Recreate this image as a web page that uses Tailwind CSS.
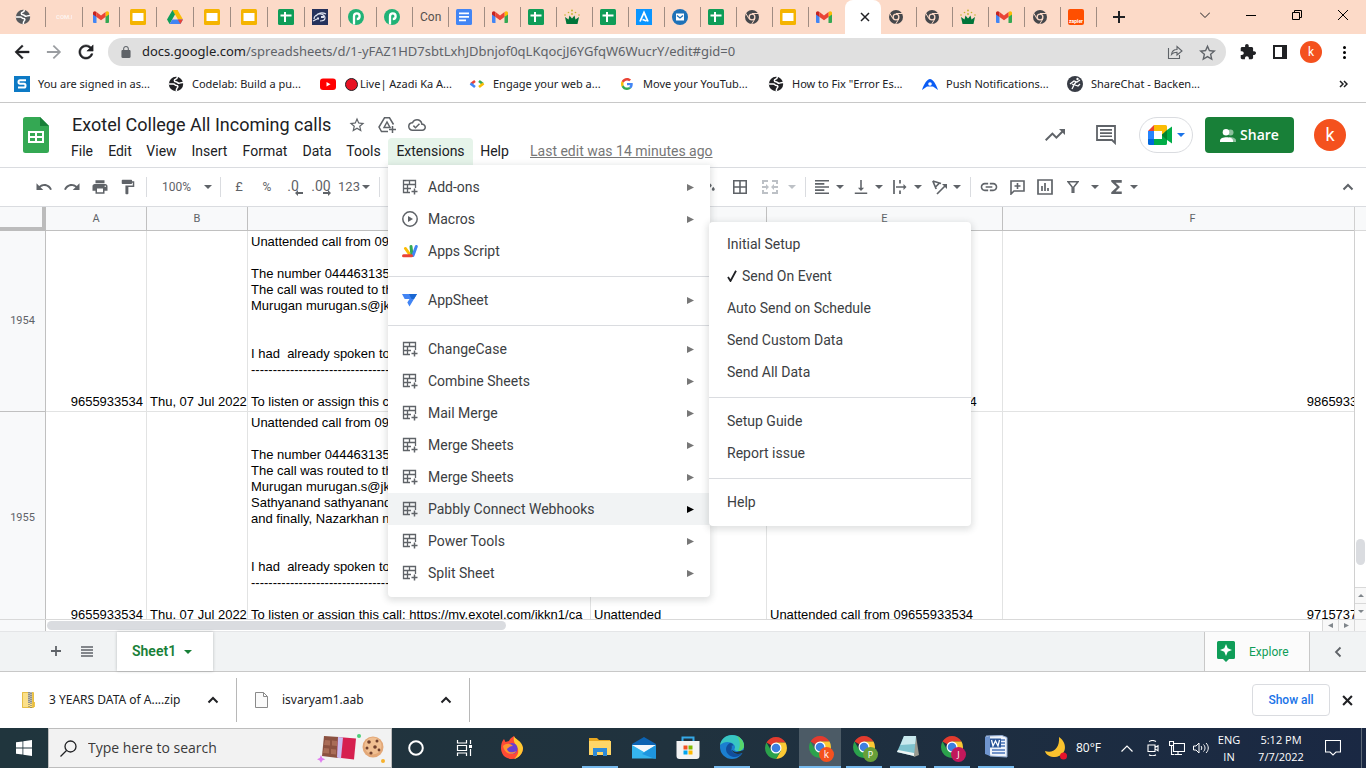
<!DOCTYPE html>
<html lang="en">
<head>
<meta charset="utf-8">
<title>Exotel College All Incoming calls - Google Sheets</title>
<script src="https://cdn.jsdelivr.net/npm/@tailwindcss/browser@4"></script>
</head>
<body class="h-screen overflow-hidden bg-white font-[Roboto,sans-serif] text-[#202124]">
<svg class="hidden" aria-hidden="true">
  <symbol id="globe" viewBox="0 0 16 16"><circle cx="8" cy="8" r="7.200"/><path d="M1 8h4.500c1.500 0 1.300 1.600 3 1.600s1.700 1.400.8 2.200S8.300 13 8.300 15M9.300 1c0 1.500-.6 1.900-1.900 2.200S5.800 5.800 7.700 5.800 9.500 7.300 11 7.300s1.500-.9 4-.9" fill="none" stroke="#fff" stroke-width="1.500"/></symbol>
  <symbol id="gmail" viewBox="0 0 16 12"><path d="M0 2v9a1 1 0 0 0 1 1h2.500V5z" fill="#4285f4"/><path d="M16 2v9a1 1 0 0 1-1 1h-2.500V5z" fill="#34a853"/><path d="M12.500 1v5L16 3.500V2c0-1.600-1.800-2.500-3.500-1z" fill="#fbbc04"/><path d="M3.500 1v5L0 3.500V2C0 .4 1.800-.5 3.500 1z" fill="#c5221f"/><path d="M3.500 1v5L8 9.300 12.500 6V1L8 4.400z" fill="#ea4335"/></symbol>
  <symbol id="slides" viewBox="0 0 16 16"><rect width="16" height="16" rx="1.500" fill="#f5b400"/><rect x="2.500" y="4" width="11" height="8" fill="#fff"/></symbol>
  <symbol id="sheet" viewBox="0 0 16 16"><rect width="16" height="16" rx="1.500" fill="#0f9d58"/><path d="M6 3h2v2.500h5.500v2H8V13H6V7.500H2.500v-2H6z" fill="#fff"/></symbol>
  <symbol id="doc" viewBox="0 0 16 16"><rect width="16" height="16" rx="1.500" fill="#4285f4"/><path d="M3 3.500h10v1.700H3zM3 7h10v1.700H3zM3 10.500h7v1.700H3z" fill="#fff"/></symbol>
  <symbol id="drive" viewBox="0 0 16 14"><path d="M5.500 0h5L8 4.400z" fill="#188038"/><path d="M5.500 0 0 9.500 2.600 14 8 4.500z" fill="#0f9d58"/><path d="M10.500 0 16 9.500h-5L5.500 0z" fill="#fbbc04"/><path d="M5.300 9.500H16L13.400 14H2.600z" fill="#4285f4"/><path d="M10.700 9.500H16L13.400 14z" fill="#ea4335"/></symbol>
  <symbol id="pabbly" viewBox="0 0 16 16"><circle cx="8" cy="8" r="8" fill="#20b276"/><path d="M6 15.500V7.200a2.800 2.800 0 1 1 2.800 2.800" fill="none" stroke="#fff" stroke-width="2.300"/></symbol>
  <symbol id="crown" viewBox="0 0 16 16"><path d="M2.500 15h11l1.500-7-3.500 2.500-1-4L8 9.500l-2.500-3-1 4L1 8z" fill="#00753a"/><g fill="#c5b52c"><circle cx="1" cy="6" r=".8"/><circle cx="4.500" cy="3.500" r=".8"/><circle cx="8" cy="1.500" r=".9"/><circle cx="11.500" cy="3.500" r=".8"/><circle cx="15" cy="6" r=".8"/><circle cx="8" cy="5" r=".9"/></g></symbol>
  <symbol id="chromegray" viewBox="0 0 16 16"><circle cx="8" cy="8" r="7" fill="#45474b"/><circle cx="8" cy="8" r="3.500" fill="#fcdac8"/><circle cx="8" cy="8" r="2.200" fill="#45474b"/><path d="M8 4.500h6.500M5 9.700 1.700 4.200M11 9.700 7.700 15" stroke="#fcdac8" stroke-width="1"/></symbol>
  <symbol id="chrome" viewBox="0 0 24 24"><path d="M12 12 2.500 6.500A11 11 0 0 1 21.500 6.500H12z" fill="#e33b2e"/><path d="M12 12l0-5.500h9.500A11 11 0 0 1 12 23l4.800-8.300z" fill="#fcc934"/><path d="M12 12l4.800 2.700L12 23A11 11 0 0 1 2.500 6.500l4.700 8.200z" fill="#2ba24c"/><circle cx="12" cy="12" r="5.500" fill="#fff"/><circle cx="12" cy="12" r="4.300" fill="#3d7fe0"/></symbol>
  <symbol id="caret" viewBox="0 0 8 4"><path d="M0 0h8L4 4z"/></symbol>
  <symbol id="tri" viewBox="0 0 7 7"><path d="M0 0v7l7-3.500z"/></symbol>
  <symbol id="star" viewBox="0 0 24 24"><path d="M22 9.240l-7.190-.62L12 2 9.190 8.630 2 9.240l5.460 4.730L5.820 21 12 17.270 18.180 21l-1.630-7.030L22 9.240zM12 15.400l-3.760 2.270 1-4.280-3.320-2.880 4.380-.38L12 6.100l1.710 4.040 4.380.38-3.320 2.880 1 4.280L12 15.400z"/></symbol>
  <symbol id="addon" viewBox="0 0 16 16"><path d="M13.500 9V1.500h-12v12H8M1.500 5.500h12M1.500 9.500H9M7.500 1.500v4M5.500 5.500v8" fill="none" stroke="#5f6368" stroke-width="1.300"/><path d="M12.500 9.500v6M9.500 12.500h6" stroke="#5f6368" stroke-width="1.500"/></symbol>
  <symbol id="up" viewBox="0 0 12 8"><path d="M1.500 6.500 6 2l4.500 4.500" fill="none" stroke="currentColor" stroke-width="2"/></symbol>
</svg>

<div class="flex h-full flex-col">
  <!-- Tab strip -->
  <div class="flex h-[34px] shrink-0 items-center bg-[#fcdac8] text-xs" role="tablist">
    <div class="flex h-5 w-[46px] items-center justify-center border-r border-[#a08c82]"><svg class="size-4 fill-[#55585c]"><use href="#globe"/></svg></div>
    <div class="flex h-5 w-[37px] items-center justify-center border-r border-[#a08c82]"><span class="w-4 overflow-hidden text-[6px] font-bold text-[#fdf3ee]">COM.NT</span></div>
    <div class="flex h-5 w-[37px] items-center justify-center border-r border-[#a08c82]"><svg class="h-3 w-4"><use href="#gmail"/></svg></div>
    <div class="flex h-5 w-[37px] items-center justify-center border-r border-[#a08c82]"><svg class="size-4"><use href="#slides"/></svg></div>
    <div class="flex h-5 w-[37px] items-center justify-center border-r border-[#a08c82]"><svg class="h-[14px] w-4"><use href="#drive"/></svg></div>
    <div class="flex h-5 w-[37px] items-center justify-center border-r border-[#a08c82]"><svg class="size-4"><use href="#slides"/></svg></div>
    <div class="flex h-5 w-[37px] items-center justify-center border-r border-[#a08c82]"><svg class="size-4"><use href="#slides"/></svg></div>
    <div class="flex h-5 w-[37px] items-center justify-center border-r border-[#a08c82]"><svg class="size-4"><use href="#sheet"/></svg></div>
    <div class="flex h-5 w-9 items-center justify-start border-r border-[#a08c82] pl-[7px]"><svg class="size-4" viewBox="0 0 16 16"><path d="M0 0h16v16H0z" fill="#25325c"/><path d="M2 10c0-3 3-5 6-5s5 2 5 4-2 3-5 3M1 12l4-2M4 7c2-3 6-4 10-2" fill="none" stroke="#dfe4f0" stroke-width="1.200"/><path d="M5 8.500h2v2H5zM9 7h3v2H9z" fill="#dfe4f0"/></svg></div>
    <div class="flex h-5 w-9 items-center justify-start border-r border-[#a08c82] pl-[7px]"><svg class="size-4"><use href="#pabbly"/></svg></div>
    <div class="flex h-5 w-9 items-center justify-start border-r border-[#a08c82] pl-[7px]"><svg class="size-4"><use href="#pabbly"/></svg></div>
    <div class="flex h-5 w-9 items-center overflow-hidden border-r border-[#a08c82] pl-[7px] text-[#55504d]">Con</div>
    <div class="flex h-5 w-9 items-center justify-start border-r border-[#a08c82] pl-[7px]"><svg class="size-4"><use href="#doc"/></svg></div>
    <div class="flex h-5 w-9 items-center justify-start border-r border-[#a08c82] pl-[7px]"><svg class="h-3 w-4"><use href="#gmail"/></svg></div>
    <div class="flex h-5 w-9 items-center justify-start border-r border-[#a08c82] pl-[7px]"><svg class="size-4"><use href="#sheet"/></svg></div>
    <div class="flex h-5 w-9 items-center justify-start border-r border-[#a08c82] pl-[7px]"><svg class="size-4"><use href="#crown"/></svg></div>
    <div class="flex h-5 w-9 items-center justify-start border-r border-[#a08c82] pl-[7px]"><svg class="size-4"><use href="#sheet"/></svg></div>
    <div class="flex h-5 w-9 items-center justify-start border-r border-[#a08c82] pl-[7px]"><svg class="size-4" viewBox="0 0 16 16"><path d="M0 0h16v16H0z" fill="#0a95ff"/><path d="M4 12.500 8 3.500l4 9M6.500 10.500l4 1.500" fill="none" stroke="#fff" stroke-width="1.800"/></svg></div>
    <div class="flex h-5 w-9 items-center justify-start border-r border-[#a08c82] pl-[7px]"><svg class="size-4" viewBox="0 0 16 16"><circle cx="8" cy="8" r="8" fill="#1f72b8"/><path d="M4 4.500h8v7H4z" fill="#fff"/><path d="m5 6.500 3 2.500 3-2.500" fill="none" stroke="#1f72b8" stroke-width="1.300"/></svg></div>
    <div class="flex h-5 w-9 items-center justify-start border-r border-[#a08c82] pl-[7px]"><svg class="size-4"><use href="#sheet"/></svg></div>
    <div class="flex h-5 w-9 items-center justify-start border-r border-[#a08c82] pl-[7px]"><svg class="size-4"><use href="#chromegray"/></svg></div>
    <div class="flex h-5 w-9 items-center justify-start border-r border-[#a08c82] pl-[7px]"><svg class="size-4"><use href="#slides"/></svg></div>
    <div class="flex h-5 w-9 items-center justify-start pl-[7px]"><svg class="h-3 w-4"><use href="#gmail"/></svg></div>
    <div class="flex h-full w-9 items-center justify-center rounded-t-lg bg-white pl-1"><button aria-label="Close tab"><svg class="size-[10px]" viewBox="0 0 10 10"><path d="m1 1 8 8M9 1 1 9" stroke="#202124" stroke-width="1.500"/></svg></button></div>
    <div class="flex h-5 w-9 items-center justify-start border-r border-[#a08c82] pl-[7px]"><svg class="size-4"><use href="#chromegray"/></svg></div>
    <div class="flex h-5 w-9 items-center justify-start border-r border-[#a08c82] pl-[7px]"><svg class="size-4"><use href="#chromegray"/></svg></div>
    <div class="flex h-5 w-9 items-center justify-start border-r border-[#a08c82] pl-[7px]"><svg class="size-4"><use href="#crown"/></svg></div>
    <div class="flex h-5 w-9 items-center justify-start border-r border-[#a08c82] pl-[7px]"><svg class="h-3 w-4"><use href="#gmail"/></svg></div>
    <div class="flex h-5 w-9 items-center justify-start border-r border-[#a08c82] pl-[7px]"><svg class="size-4"><use href="#chromegray"/></svg></div>
    <div class="flex h-5 w-9 items-center justify-start border-r border-[#a08c82] pl-[7px]"><div class="flex size-4 items-end justify-center rounded-xs bg-[#ff4f00] text-[5px] leading-[8px] font-bold text-white">zapier</div></div>
    <button class="flex w-11 justify-center" aria-label="New tab"><svg class="size-3" viewBox="0 0 12 12"><path d="M6 0v12M0 6h12" stroke="#202124" stroke-width="2"/></svg></button>
    <div class="ml-auto flex pb-1">
      <button class="flex h-6 w-[46px] items-center justify-center" aria-label="Search tabs"><svg class="h-[6px] w-[10px]" viewBox="0 0 10 6"><path d="m0 .5 5 5 5-5" fill="none" stroke="#202124"/></svg></button>
      <button class="flex h-6 w-[46px] items-center justify-center" aria-label="Minimise"><span class="h-px w-[10px] bg-black"></span></button>
      <button class="flex h-6 w-[46px] items-center justify-center" aria-label="Restore"><svg class="size-[10px]" viewBox="0 0 10 10"><path d="M.5 2.500h7v7h-7zM2.500 2.500v-2h7v7h-2" fill="none" stroke="#000"/></svg></button>
      <button class="flex h-6 w-[46px] items-center justify-center" aria-label="Close"><svg class="size-[10px]" viewBox="0 0 10 10"><path d="m0 0 10 10M10 0 0 10" stroke="#000"/></svg></button>
    </div>
  </div>

  <!-- Address bar -->
  <div class="flex h-9 shrink-0 items-center pl-[14px]">
    <button class="mr-4 flex" aria-label="Back"><svg class="size-4" viewBox="3 3 18 18"><path d="M20 11H7.830l5.590-5.590L12 4l-8 8 8 8 1.410-1.410L7.830 13H20v-2z" fill="#202124" stroke="#202124" stroke-width=".5"/></svg></button>
    <button class="mr-4 flex" aria-label="Forward"><svg class="size-4 rotate-180" viewBox="3 3 18 18"><path d="M20 11H7.830l5.590-5.590L12 4l-8 8 8 8 1.410-1.410L7.830 13H20v-2z" fill="#9a9da1"/></svg></button>
    <button class="mr-[14px] flex" aria-label="Reload"><svg class="size-4" viewBox="3 3 18 18"><path d="M17.650 6.350C16.200 4.900 14.210 4 12 4c-4.420 0-7.990 3.580-7.990 8s3.570 8 7.990 8c3.730 0 6.840-2.550 7.730-6h-2.080c-.82 2.330-3.040 4-5.650 4-3.310 0-6-2.690-6-6s2.690-6 6-6c1.660 0 3.140.69 4.220 1.780L13 11h7V4l-2.350 2.350z" fill="#202124" stroke="#202124" stroke-width=".6"/></svg></button>
    <div class="flex h-7 min-w-0 flex-1 items-center rounded-full bg-[#e0e0e0] pr-[10px] pl-3">
      <svg class="mr-[10px] size-3 shrink-0 fill-[#5f6368]" viewBox="2 1 20 21"><path d="M18 8h-1V6c0-2.760-2.240-5-5-5S7 3.240 7 6v2H6c-1.100 0-2 .9-2 2v10c0 1.100.9 2 2 2h12c1.100 0 2-.9 2-2V10c0-1.100-.9-2-2-2zM8.900 6c0-1.710 1.390-3.100 3.100-3.100s3.100 1.390 3.100 3.100v2H8.900V6z"/></svg>
      <span class="flex-1 font-['Noto_Sans',sans-serif] text-[13px] whitespace-nowrap text-[#5f6368]"><span class="text-[#202124]">docs.google.com</span>/spreadsheets/d/1-yFAZ1HD7sbtLxhJDbnjof0qLKqocjJ6YGfqW6WucrY/edit#gid=0</span>
      <button class="mr-4" aria-label="Share this page"><svg class="size-4" viewBox="0 0 16 16"><path d="M1.500 4v10.500h11V11M4.500 10.500c.5-3.500 2.500-5 5.500-5V2.500L15 7l-5 4V8.300c-2.500 0-4 .5-5.500 2.200z" fill="none" stroke="#5f6368" stroke-width="1.100"/></svg></button>
      <button aria-label="Bookmark this tab"><svg class="size-[17px] fill-[#5f6368]" viewBox="2 2 20 19"><use href="#star" width="24" height="24"/></svg></button>
    </div>
    <button class="ml-[14px]" aria-label="Extensions"><svg class="size-4 fill-[#202124]" viewBox="1 1 22 22"><path d="M20.500 11H19V7c0-1.100-.9-2-2-2h-4V3.500C13 2.120 11.880 1 10.500 1S8 2.120 8 3.500V5H4c-1.100 0-1.990.9-1.990 2v3.800H3.500c1.490 0 2.700 1.210 2.700 2.700s-1.210 2.700-2.700 2.700H2V20c0 1.100.9 2 2 2h3.800v-1.500c0-1.490 1.210-2.700 2.700-2.700 1.490 0 2.700 1.210 2.700 2.700V22H17c1.100 0 2-.9 2-2v-4h1.500c1.380 0 2.500-1.120 2.500-2.500S21.880 11 20.500 11z"/></svg></button>
    <button class="ml-4" aria-label="Side panel"><svg class="size-4" viewBox="0 0 16 16"><path d="M2 2h12v12H2z" fill="#fff" stroke="#202124" stroke-width="2"/><path d="M10 2h4v12h-4z" fill="#202124"/></svg></button>
    <button class="ml-3 flex size-[22px] items-center justify-center rounded-full bg-[#f4511e] text-xs text-white" aria-label="Profile">k</button>
    <button class="mr-4 ml-3 flex w-4 flex-col items-center gap-[2px] pl-1" aria-label="Browser menu"><span class="size-[3px] rounded-full bg-black"></span><span class="size-[3px] rounded-full bg-black"></span><span class="size-[3px] rounded-full bg-black"></span></button>
  </div>

  <!-- Bookmarks -->
  <nav class="flex h-[33px] shrink-0 items-center border-b border-[#c8c8c8] pb-1 pl-[14px] font-['Noto_Sans',sans-serif] text-[11px] whitespace-nowrap" aria-label="Bookmarks">
    <a href="#" class="flex w-[154px] items-center gap-2"><svg class="size-4" viewBox="0 0 16 16"><path d="M0 0h16v16H0z" fill="#0d7ac5"/><path d="M12 4.300H6c-2 0-2 3.500 0 3.500h4c2 0 2 3.700 0 3.700H4" fill="none" stroke="#fff" stroke-width="2"/></svg>You are signed in as...</a>
    <a href="#" class="flex w-[152px] items-center gap-2"><svg class="size-4 fill-[#202124]"><use href="#globe"/></svg>Codelab: Build a pu...</a>
    <a href="#" class="flex w-[149px] items-center"><svg class="mr-[9px] size-4" viewBox="0 0 16 16"><rect y="2.500" width="16" height="11.500" rx="3" fill="#f00"/><path d="M6.500 6v4.500l4-2.200z" fill="#fff"/></svg><span class="mr-0.5 size-[13px] rounded-full border border-[#202124] bg-[#e81123]"></span>Live| Azadi Ka A...</a>
    <a href="#" class="flex w-[150px] items-center gap-2"><svg class="size-4" viewBox="0 0 16 16"><path d="M6 5 2 8" stroke="#ea4335" stroke-width="2.600"/><path d="m1.500 7.500 4.500 3.500" stroke="#4285f4" stroke-width="2.600"/><path d="m10 5 4 3" stroke="#34a853" stroke-width="2.600"/><path d="M14.500 7.500 10 11" stroke="#fbbc04" stroke-width="2.600"/></svg>Engage your web a...</a>
    <a href="#" class="flex w-[149px] items-center gap-2"><svg class="size-4 p-0.5" viewBox="0 0 48 48"><path fill="#EA4335" d="M24 9.500c3.540 0 6.710 1.220 9.210 3.600l6.850-6.850C35.900 2.380 30.470 0 24 0 14.620 0 6.510 5.380 2.560 13.220l7.980 6.190C12.430 13.720 17.740 9.500 24 9.500z"/><path fill="#4285F4" d="M46.980 24.550c0-1.570-.15-3.090-.38-4.550H24v9.020h12.940c-.58 2.960-2.260 5.480-4.780 7.180l7.730 6c4.510-4.180 7.090-10.360 7.090-17.650z"/><path fill="#FBBC05" d="M10.530 28.590c-.48-1.450-.76-2.990-.76-4.590s.27-3.140.76-4.590l-7.980-6.190C.92 16.460 0 20.120 0 24s.92 7.540 2.560 10.780l7.970-6.190z"/><path fill="#34A853" d="M24 48c6.480 0 11.930-2.130 15.890-5.810l-7.730-6c-2.150 1.450-4.920 2.300-8.160 2.300-6.260 0-11.570-4.220-13.470-9.910l-7.980 6.190C6.510 42.620 14.620 48 24 48z"/></svg>Move your YouTub...</a>
    <a href="#" class="flex w-[154px] items-center gap-2"><svg class="size-4 fill-[#202124]"><use href="#globe"/></svg>How to Fix "Error Es...</a>
    <a href="#" class="flex w-[145px] items-center gap-2"><svg class="size-4" viewBox="0 0 16 16"><path d="M0 14c2-6 5-11 8-11s6 5 8 11l-5-3.500H5z" fill="#0a5cf5"/><circle cx="8" cy="8" r="1.800" fill="#fff"/></svg>Push Notifications...</a>
    <a href="#" class="flex items-center gap-2"><svg class="size-4" viewBox="0 0 16 16"><circle cx="8" cy="8" r="8" fill="#383c45"/><path d="m3 8 4-3 3 1 3-2M5 13l2-4-2-1M8 9l3 1 2-2M9 6l-3 4" fill="none" stroke="#fff" stroke-width="1.300"/><circle cx="10.500" cy="3" r="1.200" fill="#fff"/></svg>ShareChat - Backen...</a>
    <button class="mr-[18px] ml-auto" aria-label="More bookmarks"><svg class="h-2 w-[9px]" viewBox="0 0 9 8"><path d="m1 1 3 3-3 3M5 1l3 3-3 3" fill="none" stroke="#202124" stroke-width="1.500"/></svg></button>
  </nav>

  <!-- Document header -->
  <header class="relative z-20 flex h-[65px] shrink-0 items-start border-b border-[#dadce0]">
    <svg class="mt-[14px] ml-[23px] h-9 w-[26px] shrink-0" viewBox="0 0 26 36"><path d="M2.500 0H17l9 9v24.500a2.500 2.500 0 0 1-2.500 2.500h-21A2.500 2.500 0 0 1 0 33.500v-31A2.500 2.500 0 0 1 2.500 0z" fill="#34a853"/><path d="M17 0l9 9h-9z" fill="#188038"/><path d="M5 14h16v12H5zm2 2v3h5v-3zm7 0v3h5v-3zm-7 5v3h5v-3zm7 0v3h5v-3z" fill="#fff" fill-rule="evenodd"/></svg>
    <div class="flex-1 pl-[14px] whitespace-nowrap">
      <div class="flex h-[35px] items-center pt-2 pl-[9px]">
        <h1 class="w-[276px] text-lg">Exotel College All Incoming calls</h1>
        <button class="mr-3" aria-label="Star"><svg class="size-[18px] fill-[#5f6368]"><use href="#star"/></svg></button>
        <button class="mr-3" aria-label="Add shortcut to Drive"><svg class="size-[18px]" viewBox="0 0 18 18"><path d="M10 15.500H3.500L1 11 6.500 1.800h5l4 6.700" fill="none" stroke="#5f6368" stroke-width="1.500"/><path d="M6 11.500 9 6l3 5.500z" fill="none" stroke="#5f6368" stroke-width="1.500"/><path d="M14.500 10v7M11 13.500h7" stroke="#5f6368" stroke-width="1.500"/></svg></button>
        <button aria-label="See document status"><svg class="size-[18px] fill-[#5f6368]" viewBox="0 0 24 24"><path d="M19.350 10.040A7.490 7.490 0 0 0 12 4C9.110 4 6.600 5.640 5.350 8.040A5.994 5.994 0 0 0 0 14c0 3.310 2.690 6 6 6h13c2.760 0 5-2.240 5-5 0-2.640-2.050-4.780-4.650-4.960zM19 18H6c-2.210 0-4-1.790-4-4 0-2.050 1.530-3.760 3.560-3.970l1.070-.11.5-.95A5.469 5.469 0 0 1 12 6c2.620 0 4.880 1.860 5.390 4.430l.3 1.500 1.530.11A2.980 2.980 0 0 1 22 15c0 1.650-1.350 3-3 3zm-9-3.820-2.090-2.090L6.500 13.500 10 17l6.010-6.010-1.410-1.410z"/></svg></button>
      </div>
      <div class="flex h-[27px] items-center text-[14px]" role="menubar">
        <button class="w-[38px] text-center">File</button>
        <button class="w-[38px] text-center">Edit</button>
        <button class="w-[45px] text-center">View</button>
        <button class="w-[51px] text-center">Insert</button>
        <button class="w-[60px] text-center">Format</button>
        <button class="w-[44px] text-center">Data</button>
        <button class="w-[49px] text-center">Tools</button>
        <div class="relative">
          <button class="h-[27px] w-[85px] rounded-t-sm bg-[#e6f4ea] text-center" aria-expanded="true">Extensions</button>
          <!-- Extensions menu -->
          <div class="absolute top-full left-0 w-[322px] rounded-b-sm bg-white pt-[6px] pb-2 text-[#3c4043] shadow-[0_2px_6px_2px_rgba(60,64,67,0.15)]" role="menu">
            <button class="flex h-8 w-full items-center pr-4 pl-[14px]"><svg class="mr-[10px] size-4"><use href="#addon"/></svg>Add-ons<svg class="ml-auto size-[7px] fill-[#777]"><use href="#tri"/></svg></button>
            <button class="flex h-8 w-full items-center pr-4 pl-[14px]"><svg class="mr-[10px] size-4" viewBox="0 0 16 16"><circle cx="8" cy="8" r="7.200" fill="none" stroke="#5f6368" stroke-width="1.500"/><path d="M6 5v6l5-3z" fill="#5f6368"/></svg>Macros<svg class="ml-auto size-[7px] fill-[#777]"><use href="#tri"/></svg></button>
            <button class="flex h-8 w-full items-center pr-4 pl-[14px]"><svg class="mr-[10px] size-4" viewBox="0 0 16 16" stroke-linecap="round" stroke-width="3"><path d="m3.500 5.500 5 7" stroke="#fbbc04"/><path d="m9 3.500 1 9" stroke="#34a853"/><path d="m14.300 3.500-3.300 9" stroke="#4285f4"/><path d="M1.500 12.700h8" stroke="#ea4335"/></svg>Apps Script</button>
            <hr class="mt-[9px] mb-[7px] border-[#dadce0]">
            <button class="flex h-8 w-full items-center pr-4 pl-[14px]"><svg class="mr-[10px] size-4" viewBox="0 0 16 16"><path d="M0 2h15l-7.500 12.500-2.200-4L7.500 7H2.700z" fill="#4285f4"/><path d="M7 2h8l-3 5H9.500z" fill="#1967d2"/></svg>AppSheet<svg class="ml-auto size-[7px] fill-[#777]"><use href="#tri"/></svg></button>
            <hr class="mt-[9px] mb-[7px] border-[#dadce0]">
            <button class="flex h-8 w-full items-center pr-4 pl-[14px]"><svg class="mr-[10px] size-4"><use href="#addon"/></svg>ChangeCase<svg class="ml-auto size-[7px] fill-[#777]"><use href="#tri"/></svg></button>
            <button class="flex h-8 w-full items-center pr-4 pl-[14px]"><svg class="mr-[10px] size-4"><use href="#addon"/></svg>Combine Sheets<svg class="ml-auto size-[7px] fill-[#777]"><use href="#tri"/></svg></button>
            <button class="flex h-8 w-full items-center pr-4 pl-[14px]"><svg class="mr-[10px] size-4"><use href="#addon"/></svg>Mail Merge<svg class="ml-auto size-[7px] fill-[#777]"><use href="#tri"/></svg></button>
            <button class="flex h-8 w-full items-center pr-4 pl-[14px]"><svg class="mr-[10px] size-4"><use href="#addon"/></svg>Merge Sheets<svg class="ml-auto size-[7px] fill-[#777]"><use href="#tri"/></svg></button>
            <button class="flex h-8 w-full items-center pr-4 pl-[14px]"><svg class="mr-[10px] size-4"><use href="#addon"/></svg>Merge Sheets<svg class="ml-auto size-[7px] fill-[#777]"><use href="#tri"/></svg></button>
            <div class="relative">
              <button class="flex h-8 w-full items-center bg-[#f1f3f4] pr-4 pl-[14px]" aria-expanded="true"><svg class="mr-[10px] size-4"><use href="#addon"/></svg>Pabbly Connect Webhooks<svg class="ml-auto size-[7px] fill-black"><use href="#tri"/></svg></button>
              <div class="absolute -bottom-px left-full -ml-px w-[262px] rounded-sm bg-white pt-[6px] pb-2 shadow-[0_2px_6px_2px_rgba(60,64,67,0.15)]" role="menu">
                <button class="flex h-8 w-full items-center px-[18px]">Initial Setup</button>
                <button class="flex h-8 w-full items-center px-[18px]"><svg class="mr-[5px] h-3 w-[10px]" viewBox="0 0 10 12"><path d="M1 7l2.500 4L9 .8" fill="none" stroke="#202124" stroke-width="1.800"/></svg>Send On Event</button>
                <button class="flex h-8 w-full items-center px-[18px]">Auto Send on Schedule</button>
                <button class="flex h-8 w-full items-center px-[18px]">Send Custom Data</button>
                <button class="flex h-8 w-full items-center px-[18px]">Send All Data</button>
                <hr class="mt-[9px] mb-[7px] border-[#dadce0]">
                <button class="flex h-8 w-full items-center px-[18px]">Setup Guide</button>
                <button class="flex h-8 w-full items-center px-[18px]">Report issue</button>
                <hr class="mt-[9px] mb-[7px] border-[#dadce0]">
                <button class="flex h-8 w-full items-center px-[18px]">Help</button>
              </div>
            </div>
            <button class="flex h-8 w-full items-center pr-4 pl-[14px]"><svg class="mr-[10px] size-4"><use href="#addon"/></svg>Power Tools<svg class="ml-auto size-[7px] fill-[#777]"><use href="#tri"/></svg></button>
            <button class="flex h-8 w-full items-center pr-4 pl-[14px]"><svg class="mr-[10px] size-4"><use href="#addon"/></svg>Split Sheet<svg class="ml-auto size-[7px] fill-[#777]"><use href="#tri"/></svg></button>
          </div>
        </div>
        <button class="w-[43px] text-center">Help</button>
        <a href="#" class="ml-[14px] text-[#777] underline">Last edit was 14 minutes ago</a>
      </div>
    </div>
    <div class="flex h-16 items-center pr-5">
      <button aria-label="Activity dashboard"><svg class="mr-[30px] size-[22px] fill-[#5f6368]" viewBox="1 1 22 22"><path d="M16 6l2.290 2.290-4.880 4.880-4-4L2 16.590 3.410 18l6-6 4 4 6.300-6.290L22 12V6z"/></svg></button>
      <button aria-label="Open comment history"><svg class="mr-[23px] size-5" viewBox="2 2 20 20"><path d="M3 3h18v17l-3-3H3z" fill="none" stroke="#5f6368" stroke-width="1.800"/><path d="M6 6h12v1.700H6zM6 9.200h12v1.700H6zM6 12.400h12v1.700H6z" fill="#5f6368"/></svg></button>
      <button class="mr-3 flex h-9 w-[54px] items-center justify-center gap-1 rounded-full border border-[#dadce0]" aria-label="Join a call"><svg class="h-5 w-[25px]" viewBox="0 0 25 20"><path d="M0 6 6 0v6z" fill="#ea4335"/><path d="M6 0h11.500A1.500 1.500 0 0 1 19 1.500V7l-5 4V6H6z" fill="#fbbc04"/><path d="M0 6h6v8H0z" fill="#2684fc"/><path d="M0 14h6v6H1.500A1.500 1.500 0 0 1 0 18.500z" fill="#0066da"/><path d="M6 14h8V9l5 3v6.500a1.500 1.500 0 0 1-1.500 1.500H6z" fill="#00ac47"/><path d="m13.500 10 5.500-5v10z" fill="#00832d"/><path d="m19 5 5-3.500v17L19 15z" fill="#00ac47"/><path d="M6 6h8v8H6z" fill="#fff"/></svg><svg class="h-1 w-2 fill-[#1a73e8]"><use href="#caret"/></svg></button>
      <button class="mr-5 flex h-9 w-[89px] items-center justify-center gap-1 rounded-sm bg-[#188038] text-sm font-bold text-white"><svg class="h-[13px] w-4" viewBox="0 0 16 13"><circle cx="10.500" cy="3.500" r="3" fill="#8cc09c"/><path d="M9 8c4 0 7 1.500 7 3.500V13H9z" fill="#8cc09c"/><circle cx="6" cy="3.300" r="3.300" fill="#fff"/><path d="M0 13v-1.500c0-4.500 13-4.500 13 0V13z" fill="#fff"/></svg><span class="font-['Open_Sans',sans-serif] font-semibold">Share</span></button>
      <button class="flex size-8 items-center justify-center rounded-full bg-[#f4511e] text-lg text-white" aria-label="Google Account">k</button>
    </div>
  </header>

  <!-- Toolbar -->
  <div class="flex h-[39px] shrink-0 items-center overflow-hidden border-b border-[#dadce0] pl-[30px] text-xs text-[#5f6368]" role="toolbar">
    <button class="flex w-7 justify-center" aria-label="Undo"><svg class="size-[18px] fill-current" viewBox="0 0 24 24"><path d="M12.500 8c-2.650 0-5.050.99-6.900 2.600L2 7v9h9l-3.620-3.620c1.390-1.160 3.160-1.880 5.120-1.880 3.540 0 6.550 2.310 7.600 5.500l2.370-.78C21.080 11.030 17.150 8 12.500 8z"/></svg></button>
    <button class="flex w-7 justify-center" aria-label="Redo"><svg class="size-[18px] fill-current" viewBox="0 0 24 24"><path d="M18.400 10.600C16.550 8.990 14.150 8 11.500 8c-4.650 0-8.580 3.030-9.960 7.220L3.900 16c1.050-3.190 4.050-5.500 7.600-5.500 1.950 0 3.730.72 5.120 1.880L13 16h9V7l-3.600 3.600z"/></svg></button>
    <button class="flex w-7 justify-center" aria-label="Print"><svg class="size-[18px] fill-current" viewBox="0 0 24 24"><path d="M19 8H5c-1.660 0-3 1.340-3 3v6h4v4h12v-4h4v-6c0-1.660-1.340-3-3-3zm-3 11H8v-5h8v5zm3-7c-.55 0-1-.45-1-1s.45-1 1-1 1 .45 1 1-.45 1-1 1zm-1-9H6v4h12V3z"/></svg></button>
    <button class="flex w-7 justify-center" aria-label="Paint format"><svg class="h-4 w-[14px] fill-current" viewBox="3 1 19 22" preserveAspectRatio="none"><path d="M18 4V3c0-.55-.45-1-1-1H5c-.55 0-1 .45-1 1v4c0 .55.45 1 1 1h12c.55 0 1-.45 1-1V6h1v4H9v11c0 .55.450 1 1 1h2c.55 0 1-.45 1-1v-9h8V4h-3z"/></svg></button>
    <span class="mx-1 h-5 w-px bg-[#dadce0]"></span>
    <div class="flex w-[65px] items-center justify-between pr-1 pl-[11px]"><select class="w-9 appearance-none" aria-label="Zoom"><option>100%</option></select><svg class="h-1 w-2 fill-current"><use href="#caret"/></svg></div>
    <span class="mx-1 h-5 w-px bg-[#dadce0]"></span>
    <button class="w-7 text-center text-[13px]">£</button>
    <button class="w-7 text-center">%</button>
    <button class="flex w-7 flex-col items-center" aria-label="Decrease decimal places"><span class="-mb-[3px] pr-1 text-[14px] leading-[14px]">.0</span><svg class="ml-2 h-[6px] w-2" viewBox="0 0 8 6"><path d="M3 0 0 3l3 3V4h5V2H3z" fill="#5f6368"/></svg></button>
    <button class="flex w-7 flex-col items-center" aria-label="Increase decimal places"><span class="-mb-[3px] pr-1 text-[14px] leading-[14px]">.00</span><svg class="ml-2 h-[6px] w-2" viewBox="0 0 8 6"><path d="m5 0 3 3-3 3V4H0V2h5z" fill="#5f6368"/></svg></button>
    <button class="flex w-[34px] items-center justify-center gap-[2px] text-[13px]">123<svg class="h-1 w-2 fill-current"><use href="#caret"/></svg></button>
    <span class="ml-2 h-5 w-px bg-[#dadce0]"></span>
    <div class="flex w-[315px] items-center gap-6 px-3"><button>Default (Ari...</button><button>10</button><button class="font-bold">B</button><button class="italic">I</button><button class="line-through">S</button><button class="underline">A</button></div>
    <button class="flex w-[30px] justify-center pr-1" aria-label="Fill colour"><svg class="size-[18px] fill-current" viewBox="0 0 24 24"><path d="M16.560 8.940 7.620 0 6.210 1.410l2.380 2.380-5.150 5.150a1.490 1.490 0 0 0 0 2.120l5.500 5.500c.29.29.68.44 1.060.44s.77-.15 1.060-.44l5.500-5.500c.59-.58.59-1.530 0-2.120zM19 11.500s-2 2.170-2 3.500c0 1.100.9 2 2 2s2-.9 2-2c0-1.330-2-3.500-2-3.500z"/></svg></button>
    <button class="flex w-[30px] justify-center" aria-label="Borders"><svg class="size-[14px] fill-current" viewBox="3 3 18 18"><path d="M3 3v18h18V3H3zm8 16H5v-6h6v6zm0-8H5V5h6v6zm8 8h-6v-6h6v6zm0-8h-6V5h6v6z"/></svg></button>
    <button class="flex w-12 items-center justify-center gap-[10px]" aria-label="Merge cells" disabled><svg class="h-[14px] w-4" viewBox="0 0 16 14"><path d="M1 4V1h5M10 1h5v3M1 10v3h5M10 13h5v-3M0 7h5M16 7h-5" fill="none" stroke="#bdc1c6" stroke-width="2"/><path d="m4 4 3 3-3 3zM12 4 9 7l3 3z" fill="#bdc1c6"/></svg><svg class="h-1 w-2 fill-[#bdc1c6]"><use href="#caret"/></svg></button>
    <span class="ml-0.5 h-5 w-px bg-[#dadce0]"></span>
    <button class="ml-1 flex w-[39px] items-center justify-center gap-[7px]" aria-label="Horizontal align"><svg class="size-[14px] fill-current" viewBox="3 3 18 18"><path d="M15 15H3v2h12v-2zm0-8H3v2h12V7zM3 13h18v-2H3v2zm0 8h18v-2H3v2zM3 3v2h18V3H3z"/></svg><svg class="h-1 w-2 fill-current"><use href="#caret"/></svg></button>
    <button class="flex w-[39px] items-center justify-center gap-[7px]" aria-label="Vertical align"><svg class="size-[14px] fill-current" viewBox="3 3 18 18"><path d="M16 13h-3V3h-2v10H8l4 4 4-4zM4 19v2h16v-2H4z"/></svg><svg class="h-1 w-2 fill-current"><use href="#caret"/></svg></button>
    <button class="flex w-[39px] items-center justify-center gap-[7px]" aria-label="Text wrapping"><svg class="size-[14px]" viewBox="0 0 14 14"><path d="M1 0v14M7 0v3.500M7 10.500V14M3 7h8" fill="none" stroke="#5f6368" stroke-width="1.700"/><path d="m10.500 4 3 3-3 3z" fill="#5f6368"/></svg><svg class="h-1 w-2 fill-current"><use href="#caret"/></svg></button>
    <button class="flex w-[39px] items-center justify-center gap-[6px]" aria-label="Text rotation"><svg class="size-[15px]" viewBox="0 0 15 15"><path d="M.8 1 9 3.500M.8 1l3.400 8M3.500 7l4-4M5 14l8-8" fill="none" stroke="#5f6368" stroke-width="1.700"/><path d="M10 4h5v5z" fill="#5f6368"/></svg><svg class="h-1 w-2 fill-current"><use href="#caret"/></svg></button>
    <span class="ml-1 h-5 w-px bg-[#dadce0]"></span>
    <button class="ml-1 flex w-7 justify-center" aria-label="Insert link"><svg class="size-5 fill-current" viewBox="0 0 24 24"><path d="M3.900 12c0-1.710 1.390-3.100 3.100-3.100h4V7H7c-2.760 0-5 2.240-5 5s2.240 5 5 5h4v-1.900H7c-1.710 0-3.100-1.390-3.100-3.100zM8 13h8v-2H8v2zm9-6h-4v1.900h4c1.710 0 3.100 1.390 3.100 3.100s-1.390 3.100-3.100 3.100h-4V17h4c2.760 0 5-2.240 5-5s-2.240-5-5-5z"/></svg></button>
    <button class="flex w-7 justify-center" aria-label="Insert comment"><svg class="size-[15px]" viewBox="0 0 15 15"><path d="M1 1h13v10H4l-3 3zM7.500 3v6M4.500 6h6" fill="none" stroke="#5f6368" stroke-width="1.600"/></svg></button>
    <button class="flex w-7 justify-center" aria-label="Insert chart"><svg class="size-4" viewBox="0 0 16 16"><path d="M1 1h14v14H1zM5 12V7M8 12V4M11 12V9" fill="none" stroke="#5f6368" stroke-width="1.700"/></svg></button>
    <button class="ml-2 flex w-8 items-center justify-between" aria-label="Create a filter"><svg class="size-3" viewBox="0 0 12 12"><path d="M1 .8h10L6.800 6v6H5.200V6z" fill="none" stroke="#5f6368" stroke-width="1.500"/></svg><svg class="h-1 w-2 fill-current"><use href="#caret"/></svg></button>
    <button class="ml-3 flex w-[27px] items-center justify-between" aria-label="Functions"><svg class="h-[14px] w-[11px] fill-current" viewBox="6 4 12 16"><path d="M18 4H6v2l6.500 6L6 18v2h12v-3h-7l5-5-5-5h7z"/></svg><svg class="h-1 w-2 fill-current"><use href="#caret"/></svg></button>
    <button class="mr-3 ml-auto" aria-label="Hide the menus"><svg class="h-2 w-3"><use href="#up"/></svg></button>
  </div>

  <!-- Grid -->
  <div class="flex min-h-0 flex-1">
    <div class="min-w-0 flex-1 overflow-hidden">
      <table class="w-[1383px] table-fixed border-separate border-spacing-0 font-['Liberation_Sans',Arial,sans-serif] text-[13px] leading-4 text-black">
        <colgroup><col class="w-[46px]"><col class="w-[101px]"><col class="w-[101px]"><col class="w-[343px]"><col class="w-[176px]"><col class="w-[236px]"><col class="w-[380px]"></colgroup>
        <thead class="bg-[#f8f9fa] font-[Roboto,sans-serif] text-[11px] text-[#5f6368]">
          <tr class="h-6">
            <th class="border-r-4 border-b-4 border-[#bcbcbc]"></th>
            <th class="border-r border-b border-[#c0c0c0] font-normal">A</th><th class="border-r border-b border-[#c0c0c0] font-normal">B</th><th class="border-r border-b border-[#c0c0c0] font-normal">C</th><th class="border-r border-b border-[#c0c0c0] font-normal">D</th><th class="border-r border-b border-[#c0c0c0] font-normal">E</th><th class="border-r border-b border-[#c0c0c0] font-normal">F</th>
          </tr>
        </thead>
        <tbody class="align-bottom">
          <tr class="h-[181px]">
            <th class="border-r border-b border-[#c0c0c0] bg-[#f8f9fa] align-middle font-[Roboto,sans-serif] text-[11px] font-normal text-[#5f6368]">1954</th>
            <td class="border-r border-b border-[#e2e3e3] px-[3px] pb-px text-right">9655933534</td>
            <td class="overflow-hidden border-r border-b border-[#e2e3e3] pb-px pl-[3px] whitespace-nowrap">Thu, 07 Jul 2022</td>
            <td class="overflow-hidden border-r border-b border-[#e2e3e3] pb-px pl-[3px] whitespace-pre">Unattended call from 09655933534

The number 04446313544 received a call
The call was routed to the agents
Murugan murugan.s@jkkn.ac.in


I had  already spoken to them
----------------------------------------------------------------

To listen or assign this call: https://my.exotel.com/jkkn1/ca</td>
            <td class="border-r border-b border-[#e2e3e3] pb-px pl-[3px]">Unattended</td>
            <td class="border-r border-b border-[#e2e3e3] pb-px pl-[3px] whitespace-pre">Unattended call from  09655933534</td>
            <td class="border-r border-b border-[#e2e3e3] px-[3px] pb-px text-right">9865933534</td>
          </tr>
          <tr class="h-[213px]">
            <th class="border-r border-b border-[#c0c0c0] bg-[#f8f9fa] align-middle font-[Roboto,sans-serif] text-[11px] font-normal text-[#5f6368]">1955</th>
            <td class="border-r border-b border-[#e2e3e3] px-[3px] pb-px text-right">9655933534</td>
            <td class="overflow-hidden border-r border-b border-[#e2e3e3] pb-px pl-[3px] whitespace-nowrap">Thu, 07 Jul 2022</td>
            <td class="overflow-hidden border-r border-b border-[#e2e3e3] pb-px pl-[3px] whitespace-pre">Unattended call from 09655933534

The number 04446313544 received a call
The call was routed to the agents
Murugan murugan.s@jkkn.ac.in
Sathyanand sathyanand@jkkn.ac.in
and finally, Nazarkhan nazar@jkkn.ac.in


I had  already spoken to them
----------------------------------------------------------------

To listen or assign this call: https://my.exotel.com/jkkn1/ca</td>
            <td class="border-r border-b border-[#e2e3e3] pb-px pl-[3px]">Unattended</td>
            <td class="border-r border-b border-[#e2e3e3] pb-px pl-[3px]">Unattended call from 09655933534</td>
            <td class="border-r border-b border-[#e2e3e3] px-[3px] pb-px text-right">9715737534</td>
          </tr>
        </tbody>
      </table>
    </div>
    <div class="flex w-3 shrink-0 flex-col border-l border-[#d0d0d0]">
      <div class="h-6 border-b border-[#d9d9d9] bg-[#f8f9fa]"></div>
      <div class="flex flex-1 flex-col justify-end px-px pb-[22px]"><div class="h-[26px] rounded-full bg-[#dadce0]"></div></div>
      <button class="flex h-4 items-center justify-center border-t border-[#d9d9d9] bg-[#f8f8f8]" aria-label="Scroll up"><svg class="h-[3px] w-[6px] rotate-180 fill-[#80868b]"><use href="#caret"/></svg></button>
      <button class="flex h-4 items-center justify-center border-t border-[#d9d9d9] bg-[#f8f8f8]" aria-label="Scroll down"><svg class="h-[3px] w-[6px] fill-[#80868b]"><use href="#caret"/></svg></button>
    </div>
  </div>

  <!-- Horizontal scrollbar -->
  <div class="flex h-3 shrink-0 border-t border-[#d9d9d9]">
    <div class="w-[46px] border-r border-[#c0c0c0] bg-[#f8f9fa]"></div>
    <div class="flex-1 px-px py-px"><div class="h-[9px] w-[459px] rounded-full bg-[#dadce0]"></div></div>
    <button class="flex w-4 items-center justify-center border-l border-[#d9d9d9] bg-[#f8f8f8]" aria-label="Scroll left"><svg class="size-[5px] rotate-180 fill-[#80868b]"><use href="#tri"/></svg></button>
    <button class="flex w-4 items-center justify-center border-l border-[#d9d9d9] bg-[#f8f8f8]" aria-label="Scroll right"><svg class="size-[5px] fill-[#80868b]"><use href="#tri"/></svg></button>
    <div class="w-3 border-l border-[#d9d9d9] bg-[#f8f8f8]"></div>
  </div>

  <!-- Sheet tabs -->
  <div class="flex h-[41px] shrink-0 items-center border-t border-b border-t-[#e4e5e7] border-b-[#c8c8c8] bg-[#f1f3f4]">
    <button class="ml-[51px] pb-0.5" aria-label="Add sheet"><svg class="size-[10px]" viewBox="0 0 10 10"><path d="M5 0v10M0 5h10" stroke="#5f6368" stroke-width="1.800"/></svg></button>
    <button class="mr-6 ml-5" aria-label="All sheets"><svg class="h-[11px] w-3" viewBox="0 0 12 11"><path d="M0 1h12M0 4h12M0 7h12M0 10h12" stroke="#5f6368" stroke-width="1.700"/></svg></button>
    <button class="flex h-full w-[96px] items-center gap-2 bg-white pl-[15px] text-[14px] font-semibold text-[#188038] shadow-[0_0_3px_rgba(60,64,67,0.3)]">Sheet1<svg class="h-1 w-2 fill-current"><use href="#caret"/></svg></button>
    <button class="ml-auto flex h-full w-[106px] items-center border-x border-[#c8c8c8] bg-[#fbfbfb] pl-3 text-xs text-[#0f9d58]"><svg class="mr-[14px] h-[21px] w-[18px]" viewBox="0 0 18 21"><path d="M1.500 0h15A1.500 1.500 0 0 1 18 1.500v15a1.500 1.500 0 0 1-1.500 1.500H12l-3 3-3-3H1.500A1.500 1.500 0 0 1 0 16.500v-15A1.500 1.500 0 0 1 1.500 0z" fill="#0f9d58"/><path d="m9 3 1.700 4.300L15 9l-4.300 1.700L9 15l-1.700-4.300L3 9l4.300-1.700z" fill="#fff"/></svg>Explore</button>
    <button class="flex w-14 justify-center" aria-label="Show side panel"><svg class="h-3 w-2" viewBox="0 0 8 12"><path d="M6.500 1.500 2 6l4.500 4.500" fill="none" stroke="#5f6368" stroke-width="1.800"/></svg></button>
  </div>

  <!-- Downloads -->
  <div class="flex h-14 shrink-0 items-center font-['Noto_Sans',sans-serif] text-xs">
    <div class="flex h-11 w-[237px] items-center border-r border-[#b8b8b8] pl-[22px]"><svg class="mr-[14px] h-4 w-[13px]" viewBox="0 0 13 16"><path d="M0 0h10v16H0z" fill="#fbe089"/><path d="M10 1h2v9h1v5h-3z" fill="#f0c64a"/><path d="M.5.5h11v15H.5z" fill="none" stroke="#e5bd45"/><path d="M6 0h4v11H6z" fill="#b8b8b0"/><path d="M7 0v16M9 1v15" stroke="#666" stroke-dasharray="1 1"/></svg>3 YEARS DATA of A....zip<button class="mr-[17px] ml-auto" aria-label="Download options"><svg class="h-2 w-3"><use href="#up"/></svg></button></div>
    <div class="flex h-11 w-[233px] items-center border-r border-[#b8b8b8] pl-[18px]"><svg class="mr-[14px] h-4 w-[13px]" viewBox="0 0 13 16"><path d="M.5.5h8l4 4v11H.5zM8.500.5v4h4" fill="#fafafa" stroke="#8a8a8a"/></svg>isvaryam1.aab<button class="mr-[17px] ml-auto" aria-label="Download options"><svg class="h-2 w-3"><use href="#up"/></svg></button></div>
    <button class="ml-auto h-8 w-[78px] rounded-sm border border-[#dadce0] font-[Roboto,sans-serif] text-xs font-medium text-[#1a73e8]">Show all</button>
    <button class="mr-[13px] ml-3" aria-label="Close downloads bar"><svg class="size-[11px]" viewBox="0 0 10 10"><path d="m1 1 8 8M9 1 1 9" stroke="#202124" stroke-width="1.900"/></svg></button>
  </div>

  <!-- Taskbar -->
  <footer class="flex h-10 shrink-0 items-center bg-linear-to-r from-[#20353d] via-[#20323e] to-[#1a2843] font-['Open_Sans',sans-serif] text-xs text-white">
    <button class="flex w-12 justify-center" aria-label="Start"><svg class="size-4" viewBox="0 0 16 16"><path d="M0 2.300 6.500 1.400v6.200H0zM7.300 1.300 16 0v7.600H7.300zM0 8.400h6.500v6.200L0 13.700zM7.300 8.400H16V16l-8.700-1.200z" fill="#fff"/></svg></button>
    <label class="flex h-full w-[344px] items-center border border-[#bdbdbd] bg-[#f2f2f2] pl-[11px]">
      <svg class="mr-[11px] size-[17px]" viewBox="0 0 17 17"><circle cx="10.500" cy="6.500" r="5.500" fill="none" stroke="#202124" stroke-width="1.300"/><path d="m6.500 10.500-6 6" stroke="#202124" stroke-width="1.300"/></svg>
      <input class="min-w-0 flex-1 text-[14px] outline-none placeholder:text-[#3a3a3a]" aria-label="Search" placeholder="Type here to search">
      <svg class="mr-1 h-[30px] w-[70px]" viewBox="0 0 70 30"><path d="m7 3 15 1-1 21-16-2z" fill="#8b5140"/><path d="m8 7 5 .5v5L7 12zM15 7.500l5 .5v5l-5-.5zM7 15l5 .5v5L6 20zM14 16l5 .5v5l-5-.5z" fill="#a96c57"/><path d="m21 4 18 1.500-2 21-17-2z" fill="#d6204f"/><path d="m21 4 5 .5-2 21-4-1z" fill="#c9bdf0"/><circle cx="56" cy="14" r="10.500" fill="#e3a878"/><circle cx="56" cy="13" r="8.500" fill="#f0bf92"/><g fill="#70402e"><circle cx="52" cy="9" r="1.800"/><circle cx="60" cy="8" r="1.500"/><circle cx="58" cy="14" r="1.800"/><circle cx="50" cy="15" r="1.500"/><circle cx="54" cy="20" r="1.600"/><circle cx="62" cy="17" r="1.400"/></g><circle cx="42" cy="3" r="2" fill="#4ccf78"/><circle cx="66" cy="28" r="2" fill="#f7b22c"/><path d="m4 22 1.300 3 3 1.300-3 1.300L4 30l-1.300-2.400L0 26.300 2.700 25z" fill="#e07cf0"/></svg>
    </label>
    <button class="flex w-12 justify-center" aria-label="Cortana"><svg class="size-4" viewBox="0 0 16 16"><circle cx="8" cy="8" r="6.800" fill="none" stroke="#fff" stroke-width="2"/></svg></button>
    <button class="flex w-12 justify-center" aria-label="Task view"><svg class="size-4" viewBox="0 0 16 16"><path d="M1.500 0v3h9V0M1.500 5.500h9v5h-9zM1.500 16v-3h9v3M14.500 0v4M14.500 9v7" fill="none" stroke="#fff" stroke-width="1.200"/><path d="M13 5h3v3h-3z" fill="#fff"/></svg></button>
    <button class="mr-[42px] flex w-12 justify-center" aria-label="Firefox"><svg class="size-6" viewBox="0 0 24 24"><path d="M12 23C5 23 1 18 1 12c0-4 1-7 3-9l1.500 3L9 5c1-2 2-3.500 5-5 0 3 7 5 9 12 0 6-5 11-11 11z" fill="#ff4a35"/><path d="M14 0c0 3 8 4 9 12 0 5-4 10-9 11 5-4 5-9 3-12s-4-6-3-11z" fill="#ffc931"/><circle cx="12" cy="12.500" r="5.500" fill="#6b3fd1"/><path d="M3 10c3-3 7-3 10 0-4 0-4 2-6 3 1 4 6 4 9 2-1 4-11 5-13-5z" fill="#ff9431"/></svg></button>
    <button class="flex h-full w-11 flex-col items-center justify-end" aria-label="File Explorer"><svg class="mb-[7px] size-6" viewBox="0 0 24 24"><path d="M1 3h8l2 2h11v4H1z" fill="#e9a820"/><path d="M1 6h22v14H1z" fill="#ffd667"/><path d="M5 21v-8h14v8h-4v-4H9v4z" fill="#2f8bd8"/></svg><span class="h-0.5 w-9 bg-[#76b9ed]"></span></button>
    <button class="flex w-11 justify-center" aria-label="Mail"><svg class="size-6" viewBox="0 0 24 24"><path d="M0 8 12 1l12 7v14H0z" fill="#0c63b3"/><path d="M0 9h24v2L12 17 0 11z" fill="#f4f8fc"/><path d="m0 9 12 7 12-7v13.500H0z" fill="#35b5ee"/><path d="m24 9-14 9 12 4.500h2z" fill="#1e95de"/><path d="M1 9h22l-11 6.500z" fill="#f4f8fc"/></svg></button>
    <button class="flex w-11 justify-center" aria-label="Microsoft Store"><svg class="size-6" viewBox="0 0 24 24"><path d="M6.500 6V1.500h11V6" fill="none" stroke="#35a8e6" stroke-width="2"/><path d="M.5 5h23v15a3 3 0 0 1-3 3h-17a3 3 0 0 1-3-3z" fill="#f3f3f3"/><path d="M7.500 9.500h4v4h-4z" fill="#f25022"/><path d="M12.500 9.500h4v4h-4z" fill="#7fba00"/><path d="M7.500 14.500h4v4h-4z" fill="#00a4ef"/><path d="M12.500 14.500h4v4h-4z" fill="#ffb900"/></svg></button>
    <button class="flex h-full w-11 flex-col items-center justify-end" aria-label="Edge"><svg class="mb-[7px] size-6" viewBox="0 0 24 24"><circle cx="12" cy="12" r="12" fill="#1b7fd0"/><path d="M0 10C1 4 6 0 12 0c7 0 12 5 12 10 0 4-3 6-6 6-4 0-4-2-3-3 1-5-9-9-15-3z" fill="#38c6c2"/><path d="M17 1c4 2 7 6 7 10 0 3-3 5-6 5 1-2 4-8-1-15z" fill="#57d66b"/><path d="M10 8c-7 4-4 13 4 14 4 0 7-2 8-4-6 3-11-1-11-5 0-2 1-3 2-3 0-1-1-2-3-2z" fill="#114e9c"/><path d="M14 10c-5 1-3 7 3 7l7-2v3l-2 0c-7 3-12-2-10-7z" fill="#20323e"/></svg><span class="h-0.5 w-9 bg-[#76b9ed]"></span></button>
    <button class="flex w-11 justify-center" aria-label="Chrome"><svg class="size-6"><use href="#chrome"/></svg></button>
    <button class="flex h-full w-11 flex-col items-center justify-end" aria-label="Chrome profile k"><span class="relative flex h-[38px] w-[42px] items-center justify-center bg-[#4c5b66]"><svg class="size-6"><use href="#chrome"/></svg><span class="absolute right-[7px] bottom-1 flex size-[15px] items-center justify-center rounded-full bg-[#f4511e] text-[10px]">k</span></span><span class="h-0.5 w-[42px] bg-[#76b9ed]"></span></button>
    <button class="flex h-full w-11 flex-col items-center justify-end" aria-label="Chrome profile P"><span class="relative flex h-[38px] w-[42px] items-center justify-center"><svg class="size-6"><use href="#chrome"/></svg><span class="absolute right-[7px] bottom-1 flex size-[15px] items-center justify-center rounded-full bg-[#689f38] text-[9px]">P</span></span><span class="h-0.5 w-9 bg-[#76b9ed]"></span></button>
    <button class="flex h-full w-11 flex-col items-center justify-end" aria-label="Notepad"><svg class="mb-[7px] size-6" viewBox="0 0 24 24"><path d="M8 1h12l3 19-5 2z" fill="#9a9a90"/><path d="M8 1h12l-2 20L1 17z" fill="#7fc3cf"/><path d="M8 1h12l-1 8L4.500 10z" fill="#c9e9ee"/><path d="m18 21-17-4 1-2 16 3z" fill="#eef4f4"/></svg><span class="h-0.5 w-9 bg-[#76b9ed]"></span></button>
    <button class="flex h-full w-11 flex-col items-center justify-end" aria-label="Chrome profile J"><span class="relative flex h-[38px] w-[42px] items-center justify-center"><svg class="size-6"><use href="#chrome"/></svg><span class="absolute right-[7px] bottom-1 flex size-[15px] items-center justify-center rounded-full bg-[#c2185b] text-[9px]">J</span></span><span class="h-0.5 w-9 bg-[#76b9ed]"></span></button>
    <button class="flex h-full w-11 flex-col items-center justify-end" aria-label="Word"><svg class="mb-[7px] size-6" viewBox="0 0 24 24"><path d="M2 1 18 .5l5 2V22L6 21z" fill="#eef3fa" stroke="#8fa9cf"/><path d="M15 5h6M15 8h6M15 11h6M8 15h13M8 18h13" stroke="#4a74b8" stroke-width="1.300"/><path d="M1 2 6 1v20l-5-2z" fill="#6f95cf"/><path d="M6 3.500h11v9H6z" fill="#2b579a"/><path d="m7.500 5 1.500 6 2.500-5 2.500 5 1.500-6" fill="none" stroke="#fff" stroke-width="1.300"/></svg><span class="h-0.5 w-9 bg-[#76b9ed]"></span></button>
    <div class="ml-auto flex h-full items-center">
      <button class="mr-6 flex items-center gap-2"><svg class="size-6" viewBox="0 0 24 24"><path d="M15 1c9 6 8 19-4 20-5 0-9-2-10-6 8 3 15-3 14-14z" fill="#f9c22e"/><circle cx="19.500" cy="20" r="3.500" fill="#e5142c"/></svg>80°F</button>
      <button class="-ml-1" aria-label="Show hidden icons"><svg class="h-[7px] w-3" viewBox="0 0 12 7"><path d="m.5 6.500 5.500-5.500 5.500 5.500" fill="none" stroke="#fff" stroke-width="1.200"/></svg></button>
      <button class="ml-3" aria-label="Meet Now"><svg class="size-4" viewBox="0 0 16 16"><path d="M3 5h7v6.500H3zM10 7.500l3-1.800v5l-3-1.800M4 1.500c2-1.200 5-1.200 7 0M4 14.800c2 1.200 5 1.200 7 0" fill="none" stroke="#fff" stroke-width="1.100"/></svg></button>
      <button class="ml-2" aria-label="Network"><svg class="size-4" viewBox="0 0 16 16"><path d="M5 3.500h10.500v8H4.500V6M9 11.500v3M6 14.500h7M.5 1.500h4v4h-4zM2.500 5.500v9h3" fill="none" stroke="#fff" stroke-width="1.100"/></svg></button>
      <button class="ml-2" aria-label="Volume"><svg class="size-4" viewBox="0 0 16 16"><path d="M.5 6H3l3-3v10L3 10H.5zM8 6c1 1 1 3 0 4M10.500 4.500c2 2 2 5 0 7M13 3c3 3 3 7 0 10" fill="none" stroke="#fff"/></svg></button>
      <button class="ml-1 w-8 text-center text-[11px] leading-[17px]">ENG<br>IN</button>
      <button class="ml-2 w-[56px] text-center text-[11px] leading-[17px] whitespace-nowrap">5:12 PM<br>7/7/2022</button>
      <button class="ml-4" aria-label="Notifications"><svg class="size-4" viewBox="0 0 16 16"><path d="M.5.5h15v11.500H11L8 15l-3-3H.5z" fill="none" stroke="#fff" stroke-width="1.100"/></svg></button>
      <span class="mr-1 ml-5 h-full w-px bg-[#5d6977]"></span>
    </div>
  </footer>
</div>
</body>
</html>
